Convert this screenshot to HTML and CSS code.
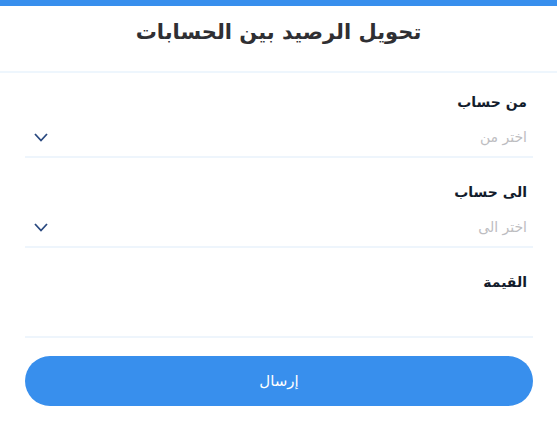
FILE: index.html
```html
<!DOCTYPE html>
<html lang="ar" dir="rtl">
<head>
  <meta charset="UTF-8" />
  <meta name="viewport" content="width=device-width, initial-scale=1.0"/>
  <title>تحويل الرصيد بين الحسابات</title>
  <link rel="stylesheet" href="styles.css">
</head>
<body>
  <header class="page-head">
    <h1>تحويل الرصيد بين الحسابات</h1>
  </header>

  <form class="transfer-form">
    <div class="field">
      <label>من حساب</label>
      <div class="select">
        <span class="placeholder">اختر من</span>
        <svg class="chevron" width="14" height="9" viewBox="0 0 14 9">
          <path d="M1 1 L7 7.5 L13 1" fill="none" stroke="#2b4a80" stroke-width="1.8"/>
        </svg>
      </div>
    </div>

    <div class="field">
      <label>الى حساب</label>
      <div class="select">
        <span class="placeholder">اختر الى</span>
        <svg class="chevron" width="14" height="9" viewBox="0 0 14 9">
          <path d="M1 1 L7 7.5 L13 1" fill="none" stroke="#2b4a80" stroke-width="1.8"/>
        </svg>
      </div>
    </div>

    <div class="field">
      <label>القيمة</label>
      <div class="select"></div>
    </div>

    <button type="button" class="submit">إرسال</button>
  </form>
</body>
</html>
```

FILE: styles.css
```css
* {
  margin: 0;
  padding: 0;
  box-sizing: border-box;
  font-family: 'DejaVu Sans', 'Noto Sans', sans-serif;
}

body {
  background: #ffffff;
  border-top: 6px solid #388fed;
  color: #1b2333;
}

.page-head {
  height: 67px;
  padding-top: 11px;
  text-align: center;
  border-bottom: 2px solid #eef6fd;
}

.page-head h1 {
  font-size: 21px;
  line-height: 30px;
  font-weight: bold;
  color: #2f2f33;
}

.transfer-form {
  padding: 19px 24px 0 25px;
}

.field {
  margin-bottom: 24px;
}

.field:last-of-type {
  margin-bottom: 18px;
}

.field label {
  display: block;
  font-size: 14px;
  font-weight: bold;
  color: #131c2c;
  padding-right: 6px;
  line-height: 20px;
}

.select {
  display: flex;
  align-items: center;
  justify-content: space-between;
  height: 46px;
  padding: 6px 6px 0 9px;
  border-bottom: 2px solid #eef5fc;
}

.placeholder {
  font-size: 14px;
  color: #bdbdc1;
}

.submit {
  display: block;
  width: 100%;
  height: 50px;
  border: none;
  border-radius: 25px;
  background: #388fed;
  color: #ffffff;
  font-size: 15px;
}
```
